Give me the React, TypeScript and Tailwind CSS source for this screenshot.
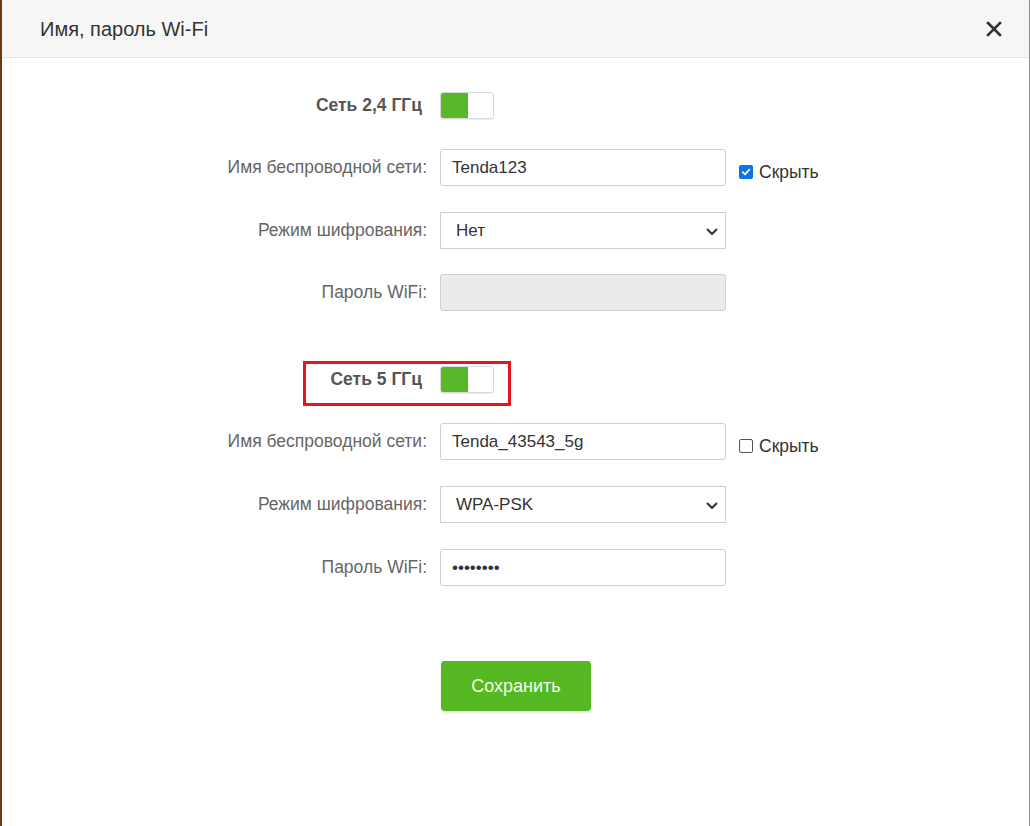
import React from "react";

const font = { fontFamily: '"Liberation Sans", Arial, sans-serif' };

function Toggle() {
  return (
    <div className="flex w-[54px] h-[27px] rounded-[3px] border border-[#d9d9d9] bg-white shadow-[0_1px_1px_rgba(0,0,0,0.08)] overflow-hidden">
      <div className="w-[27px] h-full bg-[#58b829]" />
      <div className="flex-1 h-full bg-white" />
    </div>
  );
}

function Chevron() {
  return (
    <svg width="12" height="8" viewBox="0 0 12 8" className="absolute right-[7px] top-[15px]">
      <path d="M1.5 1.5 L6 6 L10.5 1.5" fill="none" stroke="#333" strokeWidth="2" strokeLinecap="round" strokeLinejoin="round" />
    </svg>
  );
}

function Row({ label, bold, children, className = "" }: { label: string; bold?: boolean; children: React.ReactNode; className?: string }) {
  return (
    <div className={"flex items-center h-[37px] " + className}>
      <div
        className={
          bold
            ? "w-[425px] pr-[5px] text-right text-[17.5px] font-bold text-[#555]"
            : "w-[425px] text-right text-[17.5px] text-[#666]"
        }
      >
        {label}
      </div>
      <div className="ml-[13px] flex items-center">{children}</div>
    </div>
  );
}

function TextBox({ value, disabled }: { value?: string; disabled?: boolean }) {
  return (
    <div
      className={
        "w-[286px] h-[37px] rounded-[3px] border border-[#cfcfcf] flex items-center px-[11px] text-[17px] text-[#333] " +
        (disabled ? "bg-[#ebebeb]" : "bg-white")
      }
    >
      {value}
    </div>
  );
}

function SelectBox({ value }: { value: string }) {
  return (
    <div className="relative w-[286px] h-[37px] border border-[#cfcfcf] bg-white flex items-center px-[15px] text-[17px] text-[#333]">
      {value}
      <Chevron />
    </div>
  );
}

function Check({ checked }: { checked: boolean }) {
  return (
    <div className="ml-[13px] mt-[9px] flex items-center gap-[6px] text-[17.5px] text-[#333]">
      {checked ? (
        <div className="w-[14px] h-[14px] rounded-[2px] bg-[#0b75e3] flex items-center justify-center">
          <svg width="10" height="10" viewBox="0 0 10 10">
            <path d="M1.8 5.2 L4 7.3 L8.3 2.6" fill="none" stroke="white" strokeWidth="1.8" strokeLinecap="round" strokeLinejoin="round" />
          </svg>
        </div>
      ) : (
        <div className="w-[14px] h-[14px] rounded-[2px] border border-[#555] bg-white" />
      )}
      <span>Скрыть</span>
    </div>
  );
}

export default function App() {
  return (
    <div className="w-[1030px] h-[826px] flex bg-white overflow-hidden" style={font}>
      <div className="w-[2px] h-full bg-[#6b3a12]" />
      <div className="flex-1 h-full flex flex-col border-r border-[#8a8a8a]">
        <div className="h-[58px] bg-[#f6f6f6] border-b border-[#e6e6e6] flex items-center justify-between pl-[38px] pr-[27px] shrink-0">
          <span className="text-[20px] text-[#333]">Имя, пароль Wi-Fi</span>
          <svg width="16" height="16" viewBox="0 0 16 16">
            <path d="M2 2 L14 14 M14 2 L2 14" stroke="#333" strokeWidth="2.6" strokeLinecap="square" />
          </svg>
        </div>

        <div className="flex flex-col pt-[29px]">
          <Row label="Сеть 2,4 ГГц" bold>
            <Toggle />
          </Row>
          <Row label="Имя беспроводной сети:" className="mt-[25px]">
            <TextBox value="Tenda123" />
            <Check checked />
          </Row>
          <Row label="Режим шифрования:" className="mt-[26px]">
            <SelectBox value="Нет" />
          </Row>
          <Row label="Пароль WiFi:" className="mt-[25px]">
            <TextBox disabled />
          </Row>

          <div className="relative mt-[50px]">
            <Row label="Сеть 5 ГГц" bold>
              <Toggle />
            </Row>
            <div className="absolute left-[301px] top-0 w-[208px] h-[45px] border-[3px] border-[#e4151c] pointer-events-none" />
          </div>
          <Row label="Имя беспроводной сети:" className="mt-[25px]">
            <TextBox value="Tenda_43543_5g" />
            <Check checked={false} />
          </Row>
          <Row label="Режим шифрования:" className="mt-[26px]">
            <SelectBox value="WPA-PSK" />
          </Row>
          <Row label="Пароль WiFi:" className="mt-[26px]">
            <TextBox value="••••••••" />
          </Row>

          <div className="mt-[75px] pl-[439px]">
            <button className="w-[150px] h-[50px] rounded-[4px] bg-[#55b823] text-[#f2ffe6] text-[18px] shadow-[0_1px_2px_rgba(0,0,0,0.15)]">
              Сохранить
            </button>
          </div>
        </div>
      </div>
    </div>
  );
}
